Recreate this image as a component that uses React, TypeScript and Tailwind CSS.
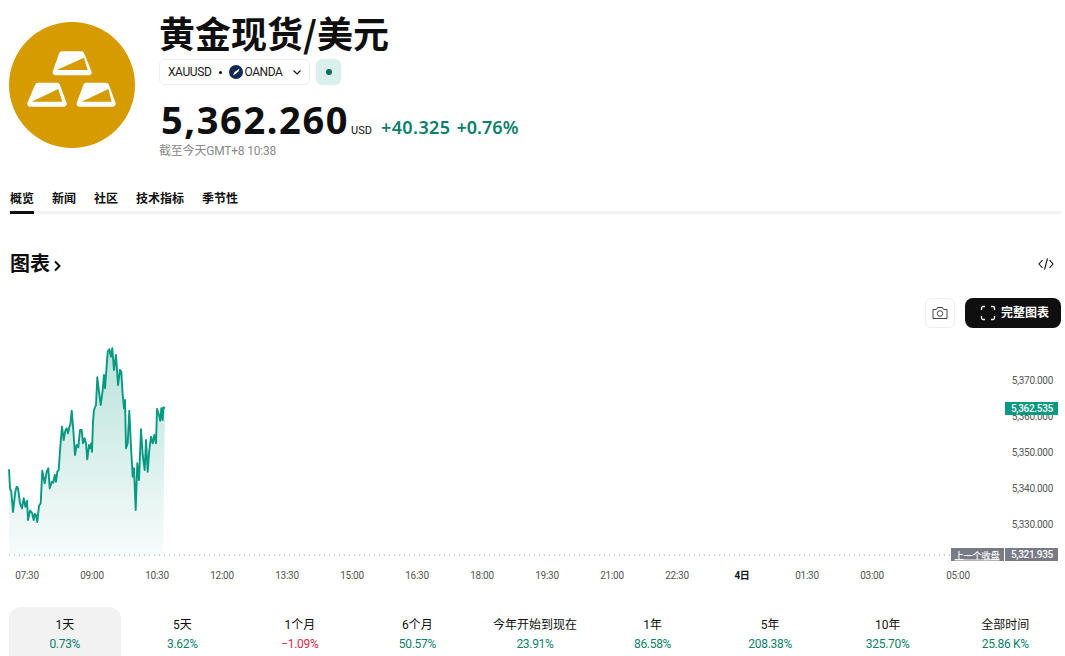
const tabs = ['概览', '新闻', '社区', '技术指标', '季节性'];
const ranges = [
  ['1天', '0.73%', 'up'], ['5天', '3.62%', 'up'], ['1个月', '−1.09%', 'down'], ['6个月', '50.57%', 'up'],
  ['今年开始到现在', '23.91%', 'up'], ['1年', '86.58%', 'up'], ['5年', '208.38%', 'up'], ['10年', '325.70%', 'up'], ['全部时间', '25.86 K%', 'up'],
];
const zoomPts = [[27,388],[30,445],[34,455],[39,516],[46,455],[50,440],[54,445],[60,490],[66,505],[71,475],[76,500],[81,482],[84,540],[90,512],[96,518],[101,540],[104,522],[108,525],[112,546],[117,497],[122,490],[127,392],[134,430],[140,395],[145,385],[149,445],[155,425],[160,428],[164,405],[168,425],[172,395],[176,390],[181,320],[186,260],[191,300],[196,272],[200,265],[204,280],[208,262],[211,255],[215,212],[220,270],[225,345],[230,315],[235,322],[240,270],[245,270],[249,310],[254,295],[258,310],[262,358],[267,315],[271,325],[274,310],[276,335],[279,245],[282,210],[288,195],[292,112],[297,155],[302,195],[308,150],[312,105],[315,145],[318,105],[323,35],[328,28],[333,50],[337,25],[342,90],[348,45],[354,135],[360,90],[364,95],[368,165],[372,205],[375,180],[378,325],[383,310],[388,212],[393,320],[398,410],[402,385],[407,510],[412,370],[417,420],[423,268],[428,345],[434,390],[438,300],[443,395],[448,330],[453,290],[458,310],[463,285],[468,310],[471,207],[477,225],[481,242],[484,205],[488,240],[490,202],[495,205]];
const pts = zoomPts.map(([x, y]) => [x / 3, y / 3 + 40]);
const linePath = pts.map(([x, y]) => `${x.toFixed(1)},${y.toFixed(1)}`).join(' ');
const areaPath = `${linePath} 163,255 9,255`;
const times = [['07:30',27],['09:00',92],['10:30',157],['12:00',222],['13:30',287],['15:00',352],['16:30',417],['18:00',482],['19:30',547],['21:00',612],['22:30',677],['4日',742],['01:30',807],['03:00',872],['05:00',958]] as const;
const prices = [['5,370.000',80.5],['5,360.000',116.5],['5,350.000',152.5],['5,340.000',188.5],['5,330.000',224.5]] as const;

function Chart() {
  return (
    <svg width="1065" height="300" viewBox="0 0 1065 300" className="block font-['Roboto','Noto_Sans_CJK_SC',sans-serif] text-[10px] tracking-[-0.3px]">
      <defs>
        <linearGradient id="fill" x1="0" y1="0" x2="0" y2="1">
          <stop offset="0" stopColor="#089981" stopOpacity="0.28" />
          <stop offset="1" stopColor="#089981" stopOpacity="0.03" />
        </linearGradient>
      </defs>
      <polygon points={areaPath} fill="url(#fill)" />
      <polyline points={linePath} fill="none" stroke="#089981" strokeWidth="1.9" strokeLinejoin="round" />
      <line x1="9" y1="255" x2="951" y2="255" stroke="#9598a1" strokeWidth="1" strokeDasharray="1 4" />
      {prices.map(([t, y]) => (
        <text key={t} x="1053" y={y + 3.5} textAnchor="end" fill="#555">{t}</text>
      ))}
      <rect x="1005" y="102" width="53" height="13" fill="#089981" />
      <text x="1053" y="112" textAnchor="end" fill="#fff" fontWeight="500">5,362.535</text>
      <rect x="951" y="248" width="53" height="13" fill="#787b86" />
      <text x="977" y="258.5" textAnchor="middle" fill="#fff" fontSize="9.3" fontWeight="500" textDecoration="underline">上一个收盘</text>
      <rect x="1005" y="248" width="53" height="13" fill="#787b86" />
      <text x="1053" y="258" textAnchor="end" fill="#fff" fontWeight="500">5,321.935</text>
      {times.map(([t, x]) => (
        <text key={t} x={x} y="279" textAnchor="middle" fill={t === '4日' ? '#131722' : '#555'} fontWeight={t === '4日' ? 700 : 400}>{t}</text>
      ))}
    </svg>
  );
}

function Logo() {
  const gold = '#d69b00';
  return (
    <svg width="126" height="126" viewBox="0 0 126 126">
      <g transform="translate(11 23) scale(0.3333)">
        <path d="M126 28 H184 L206 82 H107 Z" fill="#fff" stroke="#fff" strokeWidth="18" strokeLinejoin="round" />
        <polygon points="110,75 192,38 203,75" fill={gold} />
        <path d="M54 122 H111 L131 176 H31 Z" fill="#fff" stroke="#fff" strokeWidth="18" strokeLinejoin="round" />
        <polygon points="35,170 115,132 127,170" fill={gold} />
        <path d="M199 122 H258 L278 176 H179 Z" fill="#fff" stroke="#fff" strokeWidth="18" strokeLinejoin="round" />
        <polygon points="185,170 265,132 275,170" fill={gold} />
      </g>
    </svg>
  );
}

export default function App() {
  return (
    <div className="w-[1065px] h-[656px] overflow-hidden bg-white text-[#0f0f0f] font-['Roboto','Noto_Sans_CJK_SC',sans-serif]">
      <header className="flex pl-[9px] pt-[10px] h-[190px]">
        <div className="mt-[12px] w-[126px] h-[126px] shrink-0 rounded-full bg-[#d69b00]">
          <Logo />
        </div>
        <div className="ml-[24px] flex flex-col items-start">
          <h1 className="text-[36px] leading-[44px] font-bold font-['Noto_Sans_CJK_SC',sans-serif]">黄金现货/美元</h1>
          <div className="mt-[5px] flex gap-[6px]">
            <div className="h-[26px] w-[151px] rounded-md border border-[#eeeeee] flex items-center pl-[8px] text-[12px] tracking-[-0.4px] text-[#1a1a1a]">
              <span>XAUUSD</span>
              <span className="ml-[8px] w-[3px] h-[3px] rounded-full bg-[#0f0f0f]" />
              <span className="ml-[7px] w-[14px] h-[14px] rounded-full bg-[#0e2a52] flex items-center justify-center">
                <svg width="10" height="10" viewBox="0 0 10 10"><path d="M2 8.5 L3.5 5 L6 3.5 L8.5 1.5 L7.5 4.5 L5 6.5 Z" fill="#fff" /></svg>
              </span>
              <span className="ml-[1px]">OANDA</span>
              <svg className="ml-[9px]" width="10" height="10" viewBox="0 0 10 10"><path d="M1.5 3.5 L5 7 L8.5 3.5" fill="none" stroke="#0f0f0f" strokeWidth="1.1" /></svg>
            </div>
            <div className="w-[25px] h-[26px] rounded-md bg-[#daf0ec] flex items-center justify-center">
              <span className="w-[6px] h-[6px] rounded-full bg-[#0c6b58]" />
            </div>
          </div>
          <div className="mt-[15px] ml-[2px] h-[38px] flex items-baseline">
            <span className="text-[38px] leading-[38px] font-bold font-['Noto_Sans',sans-serif] tracking-[1.6px]">5,362.260</span>
            <span className="ml-[2px] text-[11px]">USD</span>
            <span className="ml-[9px] text-[18px] font-semibold font-['Noto_Sans',sans-serif] tracking-[0.4px] text-[#0b7f6c]">+40.325</span>
            <span className="ml-[6px] text-[18px] font-semibold font-['Noto_Sans',sans-serif] text-[#0b7f6c]">+0.76%</span>
          </div>
          <div className="mt-[5px] text-[12px] leading-[16px] tracking-[-0.2px] text-[#8a8a8a]">截至今天GMT+8 10:38</div>
        </div>
      </header>
      <nav className="ml-[10px] mr-[4px] h-[24px] flex gap-[18px] border-b-[3px] border-[#f2f2f2] text-[12px] font-semibold">
        {tabs.map((t, i) => (
          <span key={t} className={i === 0 ? 'h-[24px] border-b-[3px] border-[#0f0f0f]' : 'h-[24px]'}>{t}</span>
        ))}
      </nav>
      <div className="ml-[10px] mr-[11px] mt-[36px] flex items-center justify-between">
        <div className="flex items-center gap-[3px] text-[20px] leading-[28px] font-semibold">
          图表
          <svg width="8" height="12" viewBox="0 0 8 12" className="mt-[4px]"><path d="M2 1.5 L6.5 6 L2 10.5" fill="none" stroke="#0f0f0f" strokeWidth="2" /></svg>
        </div>
        <svg width="16" height="12" viewBox="0 0 16 12"><path d="M4.5 2 L1 6 L4.5 10 M11.5 2 L15 6 L11.5 10 M9.5 0.5 L6.5 11.5" fill="none" stroke="#0f0f0f" strokeWidth="1.1" /></svg>
      </div>
      <div className="relative mt-[20px] pt-[2px]">
        <div className="absolute right-[4px] top-0 flex gap-[10px]">
          <div className="w-[30px] h-[30px] rounded-md border border-[#eeeeee] flex items-center justify-center bg-white">
            <svg width="16" height="14" viewBox="0 0 16 14"><path d="M1 3.5 H4.5 L5.5 1.5 H10.5 L11.5 3.5 H15 V12.5 H1 Z" fill="none" stroke="#444" strokeWidth="1" /><circle cx="8" cy="7.5" r="2.8" fill="none" stroke="#444" strokeWidth="1" /></svg>
          </div>
          <div className="w-[96px] h-[30px] rounded-lg bg-[#0f0f0f] text-white text-[12px] font-semibold flex items-center pl-[15px] gap-[5px]">
            <svg width="16" height="16" viewBox="0 0 16 16"><path d="M5 1.5 H3 A1.5 1.5 0 0 0 1.5 3 V5 M11 1.5 H13 A1.5 1.5 0 0 1 14.5 3 V5 M5 14.5 H3 A1.5 1.5 0 0 1 1.5 13 V11 M11 14.5 H13 A1.5 1.5 0 0 0 14.5 13 V11" fill="none" stroke="#fff" strokeWidth="1.3" /></svg>
            <span>完整图表</span>
          </div>
        </div>
        <Chart />
      </div>
      <div className="ml-[9px] mr-[4px] mt-[7px] grid grid-cols-9 gap-[6px]">
        {ranges.map(([label, value, dir], i) => (
          <div key={label} className={`h-[49px] pt-[9px] text-center rounded-t-xl ${i === 0 ? 'bg-[#f2f2f2]' : ''}`}>
            <div className="text-[12px] leading-[18px] text-[#0f0f0f]">{label}</div>
            <div className={`text-[12px] leading-[20px] tracking-[-0.3px] ${dir === 'up' ? 'text-[#0b7f6c]' : 'text-[#e0294a]'}`}>{value}</div>
          </div>
        ))}
      </div>
    </div>
  );
}
